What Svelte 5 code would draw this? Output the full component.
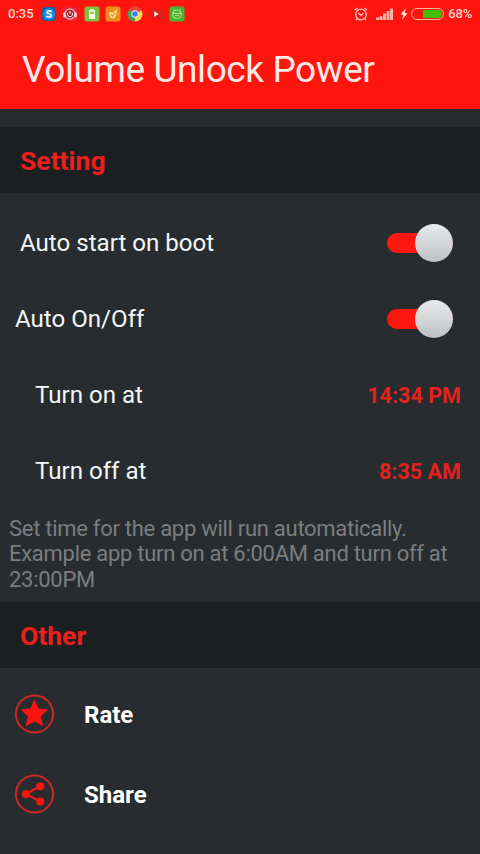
<script>
    let autoStart = $state(true);
    let autoOnOff = $state(true);

    const times = [
        { label: "Turn on at", value: "14:34 PM" },
        { label: "Turn off at", value: "8:35 AM" }
    ];
</script>

<div class="screen">
    <header>
        <div class="status">
            <span class="clock">0:35</span>
            <div class="apps">
                <svg viewBox="0 0 16 16">
                    <rect x="1" y="1" width="14" height="14" rx="3" fill="#0b64a8" />
                    <circle cx="8" cy="8" r="6" fill="#1a8fdc" />
                    <path d="M10.4 5.8C9.5 4.3 5.8 4.6 5.9 6.4C6 8.2 10.3 7.5 10.3 9.5C10.3 11.5 6.3 11.5 5.5 9.9" fill="none" stroke="#fff" stroke-width="1.6" />
                </svg>
                <svg viewBox="0 0 16 16">
                    <rect x="1" y="1" width="14" height="14" rx="3" fill="#e0263a" />
                    <circle cx="8" cy="8" r="5" fill="#8e1c2c" stroke="#f5a9b0" stroke-width="1.3" />
                    <rect x="1.3" y="6.5" width="2.4" height="5" rx="1" fill="#f9dcdc" />
                    <rect x="12.3" y="6.5" width="2.4" height="5" rx="1" fill="#f9dcdc" />
                    <path d="M8 4.8V8M6.3 6.3a2.5 2.5 0 1 0 3.4 0" fill="none" stroke="#f9dcdc" stroke-width="1.1" />
                </svg>
                <svg viewBox="0 0 16 16">
                    <rect x="0.5" y="0.5" width="15" height="15" rx="2.5" fill="#7cc23e" />
                    <path d="M6.5 3h3v1.3h1.6V13H4.9V4.3h1.6z" fill="#f1ffe2" />
                    <rect x="6" y="5.8" width="4" height="2" fill="#8bcf54" />
                </svg>
                <svg viewBox="0 0 16 16">
                    <rect x="0.5" y="0.5" width="15" height="15" rx="2.5" fill="#ee8d1e" />
                    <path d="M4 6l4 .8L12.2 3 11 9.5c-1 3.6-5.5 3.5-6.2.5z" fill="#ffe29b" />
                    <path d="M6 8.5l1.7 1.6 2.6-3.6" fill="none" stroke="#ee8d1e" stroke-width="1.2" />
                </svg>
                <svg viewBox="0 0 16 16">
                    <path d="M8 8L1.5 4.25A7.5 7.5 0 0 1 14.5 4.25z" fill="#dd4b3c" />
                    <path d="M8 8L14.5 4.25A7.5 7.5 0 0 1 8 15.5z" fill="#f7d14a" />
                    <path d="M8 8V15.5A7.5 7.5 0 0 1 1.5 4.25z" fill="#3da453" />
                    <circle cx="8" cy="8" r="3.7" fill="#f3eee8" />
                    <circle cx="8" cy="8" r="2.8" fill="#4083df" />
                </svg>
                <svg viewBox="0 0 16 16">
                    <rect x="1" y="3" width="14" height="10" rx="2.5" fill="#e01e1a" />
                    <path d="M6.2 5.3v5.4l4.4-2.7z" fill="#ffe4e0" />
                </svg>
                <svg viewBox="0 0 16 16">
                    <rect x="0.5" y="0.5" width="15" height="15" rx="2.5" fill="#45b52d" />
                    <path d="M4.5 3l1.3 1.6M11.5 3l-1.3 1.6M3.7 7.5h8.6M6 9.7h4" fill="none" stroke="#b5e496" />
                    <rect x="3.7" y="4.2" width="8.6" height="8.3" rx="3.8" fill="none" stroke="#b5e496" />
                </svg>
            </div>
            <div class="system">
                <svg class="alarm" viewBox="0 0 14 14">
                    <circle cx="7" cy="7.5" r="5.3" />
                    <path d="M4.5 6.3L7 8.3 9.5 6.3M0.8 3L3.6 0.9M13.2 3L10.4 0.9M3.3 11.5L2.2 13M10.7 11.5l1.1 1.5" />
                </svg>
                <svg class="signal" viewBox="0 0 17 12">
                    <path d="M0 9.5h3V12H0zM3.6 8h2.9v4H3.6zM7.1 5.5H10V12H7.1zM10.6 3h2.9v9h-2.9zM14.1 0.5H17V12h-2.9z" />
                </svg>
                <svg class="bolt" viewBox="0 0 8 12">
                    <path d="M5.8 0L0.5 6.8h2.8L2 12l5.5-7H4.6z" />
                </svg>
                <div class="battery"><div class="charge"></div></div>
                <span>68%</span>
            </div>
        </div>
        <h1>Volume Unlock Power</h1>
    </header>

    <h2>Setting</h2>
    <div class="settings">
        <div class="row">
            <span>Auto start on boot</span>
            <button class="switch" class:on={autoStart} aria-label="Auto start on boot" onclick={() => (autoStart = !autoStart)}>
                <span class="thumb"></span>
            </button>
        </div>
        <div class="row outer">
            <span>Auto On/Off</span>
            <button class="switch" class:on={autoOnOff} aria-label="Auto On/Off" onclick={() => (autoOnOff = !autoOnOff)}>
                <span class="thumb"></span>
            </button>
        </div>
        {#each times as time}
            <div class="row time">
                <span>{time.label}</span>
                <strong>{time.value}</strong>
            </div>
        {/each}
        <p>Set time for the app will run automatically. Example app turn on at 6:00AM and turn off at 23:00PM</p>
    </div>

    <h2>Other</h2>
    <div class="links">
        <div class="link">
            <svg viewBox="0 0 40 40">
                <circle class="ring" cx="20.5" cy="20" r="18.6" />
                <path class="fill" d="M20.5 5.2L24.5 14.6 34.3 15.6 26.8 22.3 29.2 32.3 20.5 27.4 11.6 32.3 14 22.3 6.5 15.6 16.5 14.6z" />
            </svg>
            <span>Rate</span>
        </div>
        <div class="link">
            <svg viewBox="0 0 40 40">
                <circle class="ring" cx="20.5" cy="20" r="18.6" />
                <path class="line" d="M26.3 12.3L12 20 26.3 27.5" />
                <circle class="fill" cx="26.3" cy="12.3" r="4" />
                <circle class="fill" cx="12" cy="20" r="4" />
                <circle class="fill" cx="26.3" cy="27.5" r="4" />
            </svg>
            <span>Share</span>
        </div>
    </div>
</div>

<style>
    :global(body) {
        background: #282c2e;
    }
    .screen {
        width: 480px;
        height: 854px;
        overflow: hidden;
        background: #282c2e;
        color: #f3f7f8;
        font-family: Roboto, sans-serif;
    }
    header {
        height: 109px;
        margin-bottom: 18px;
        background: #ff150e;
    }
    .status {
        display: flex;
        align-items: center;
        height: 27px;
        padding: 0 8px;
        font-size: 13px;
        font-weight: 500;
        color: #ffd3cf;
    }
    .clock {
        width: 33px;
    }
    .apps {
        display: flex;
        gap: 5.4px;
    }
    .apps svg {
        width: 16px;
        height: 16px;
    }
    .system {
        display: flex;
        align-items: center;
        margin-left: auto;
        letter-spacing: -0.2px;
    }
    .alarm {
        width: 14px;
        height: 14px;
        margin-right: 8px;
        fill: none;
        stroke: #ffc5bf;
        stroke-width: 1.3;
    }
    .signal {
        width: 17px;
        height: 12px;
        margin-right: 7px;
        fill: #ffb5ae;
    }
    .bolt {
        width: 8px;
        height: 12px;
        margin-right: 3px;
        fill: #ffe0dc;
    }
    .battery {
        box-sizing: border-box;
        display: flex;
        justify-content: flex-end;
        width: 33px;
        height: 12px;
        margin-right: 4px;
        padding: 1px;
        border: 1px solid #ffb09a;
        border-radius: 6px;
    }
    .charge {
        width: 68%;
        background: #43bd0b;
        border-radius: 0 5px 5px 0;
    }
    h1 {
        margin: 0;
        padding: 21px 22px 0;
        font-size: 37px;
        line-height: 44px;
        font-weight: 400;
        letter-spacing: -0.42px;
        color: #ffe9e6;
    }
    h2 {
        height: 66px;
        margin: 0;
        padding-left: 20px;
        background: #1c1f21;
        font-size: 26.5px;
        line-height: 68px;
        font-weight: 700;
        color: #e9201d;
    }
    .settings {
        height: 409px;
        padding-top: 12px;
        box-sizing: border-box;
    }
    .row {
        display: flex;
        align-items: center;
        justify-content: space-between;
        height: 76px;
        padding: 0 27px 0 20px;
        font-size: 24.1px;
    }
    .outer {
        padding-left: 15px;
    }
    .time {
        padding: 0 19px 0 35px;
    }
    .time strong {
        font-size: 21.6px;
        font-weight: 700;
        color: #e3211f;
    }
    .switch {
        display: flex;
        align-items: center;
        width: 66px;
        height: 20px;
        padding: 0;
        border: 0;
        border-radius: 10px;
        background: #55595b;
    }
    .switch.on {
        justify-content: flex-end;
        background: #ff170f;
    }
    .thumb {
        width: 38px;
        height: 38px;
        border-radius: 50%;
        background: linear-gradient(#e9eaeb, #bfc0c3);
    }
    p {
        margin: 0;
        padding: 6.5px 9px 0;
        font-size: 22px;
        line-height: 25.5px;
        letter-spacing: -0.28px;
        color: #7b7e80;
    }
    .links {
        padding-top: 6px;
    }
    .link {
        display: flex;
        align-items: center;
        gap: 30px;
        height: 80px;
        padding-left: 14px;
        font-size: 24px;
        font-weight: 700;
        color: #fff;
    }
    .link span {
        padding-top: 2px;
    }
    .link svg {
        width: 40px;
        height: 40px;
    }
    .ring {
        fill: none;
        stroke: #cf2525;
        stroke-width: 2;
    }
    .fill {
        fill: #ff1210;
    }
    .line {
        fill: none;
        stroke: #ee1a17;
        stroke-width: 2.2;
    }
</style>
